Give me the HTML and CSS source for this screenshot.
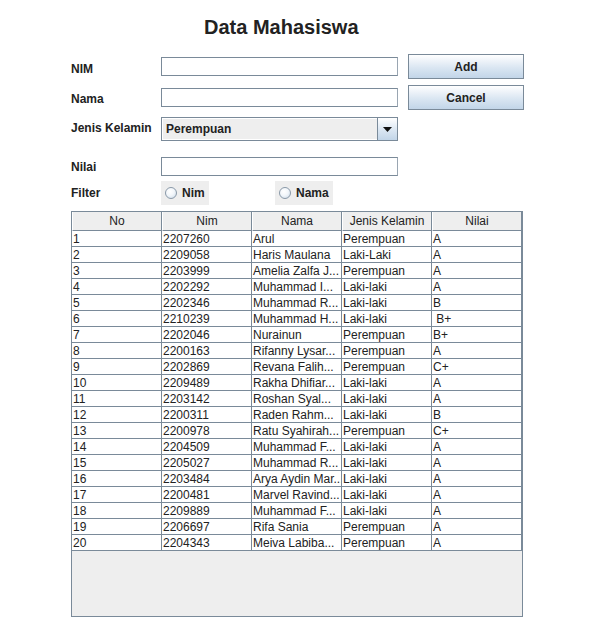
FILE: index.html
```html
<!DOCTYPE html>
<html>
<head>
<meta charset="utf-8">
<link rel="stylesheet" href="styles.css">
</head>
<body>
<div class="frame">
  <h1 class="title">Data Mahasiswa</h1>

  <div class="row row-nim">
    <span class="label lbl-nim">NIM</span>
    <div class="field"></div>
    <button class="btn">Add</button>
  </div>

  <div class="row row-nama">
    <span class="label lbl-nama">Nama</span>
    <div class="field"></div>
    <button class="btn">Cancel</button>
  </div>

  <div class="row row-jk">
    <span class="label lbl-jk">Jenis Kelamin</span>
    <div class="combo">
      <span class="combo-text">Perempuan</span>
      <span class="combo-arrow"><svg width="9" height="5" viewBox="0 0 9 5"><path d="M0 0H9L4.5 5Z" fill="#111"/></svg></span>
    </div>
  </div>

  <div class="row row-nilai">
    <span class="label">Nilai</span>
    <div class="field"></div>
  </div>

  <div class="row row-filter">
    <span class="label">Filter</span>
    <div class="radio-slot">
      <div class="radio"><span class="dot"></span><span>Nim</span></div>
    </div>
    <div class="radio"><span class="dot"></span><span>Nama</span></div>
  </div>

  <div class="pane">
    <div class="thead">
      <div class="th">No</div><div class="th">Nim</div><div class="th">Nama</div><div class="th">Jenis Kelamin</div><div class="th">Nilai</div>
    </div>
    <div class="tbody">
      <div class="td">1</div><div class="td">2207260</div><div class="td">Arul</div><div class="td">Perempuan</div><div class="td">A</div>
      <div class="td">2</div><div class="td">2209058</div><div class="td">Haris Maulana</div><div class="td">Laki-Laki</div><div class="td">A</div>
      <div class="td">3</div><div class="td">2203999</div><div class="td">Amelia Zalfa J...</div><div class="td">Perempuan</div><div class="td">A</div>
      <div class="td">4</div><div class="td">2202292</div><div class="td">Muhammad I...</div><div class="td">Laki-laki</div><div class="td">A</div>
      <div class="td">5</div><div class="td">2202346</div><div class="td">Muhammad R...</div><div class="td">Laki-laki</div><div class="td">B</div>
      <div class="td">6</div><div class="td">2210239</div><div class="td">Muhammad H...</div><div class="td">Laki-laki</div><div class="td"> B+</div>
      <div class="td">7</div><div class="td">2202046</div><div class="td">Nurainun</div><div class="td">Perempuan</div><div class="td">B+</div>
      <div class="td">8</div><div class="td">2200163</div><div class="td">Rifanny Lysar...</div><div class="td">Perempuan</div><div class="td">A</div>
      <div class="td">9</div><div class="td">2202869</div><div class="td">Revana Falih...</div><div class="td">Perempuan</div><div class="td">C+</div>
      <div class="td">10</div><div class="td">2209489</div><div class="td">Rakha Dhifiar...</div><div class="td">Laki-laki</div><div class="td">A</div>
      <div class="td">11</div><div class="td">2203142</div><div class="td">Roshan Syal...</div><div class="td">Laki-laki</div><div class="td">A</div>
      <div class="td">12</div><div class="td">2200311</div><div class="td">Raden Rahm...</div><div class="td">Laki-laki</div><div class="td">B</div>
      <div class="td">13</div><div class="td">2200978</div><div class="td">Ratu Syahirah...</div><div class="td">Perempuan</div><div class="td">C+</div>
      <div class="td">14</div><div class="td">2204509</div><div class="td">Muhammad F...</div><div class="td">Laki-laki</div><div class="td">A</div>
      <div class="td">15</div><div class="td">2205027</div><div class="td">Muhammad R...</div><div class="td">Laki-laki</div><div class="td">A</div>
      <div class="td">16</div><div class="td">2203484</div><div class="td">Arya Aydin Mar...</div><div class="td">Laki-laki</div><div class="td">A</div>
      <div class="td">17</div><div class="td">2200481</div><div class="td">Marvel Ravind...</div><div class="td">Laki-laki</div><div class="td">A</div>
      <div class="td">18</div><div class="td">2209889</div><div class="td">Muhammad F...</div><div class="td">Laki-laki</div><div class="td">A</div>
      <div class="td">19</div><div class="td">2206697</div><div class="td">Rifa Sania</div><div class="td">Perempuan</div><div class="td">A</div>
      <div class="td">20</div><div class="td">2204343</div><div class="td">Meiva Labiba...</div><div class="td">Perempuan</div><div class="td">A</div>
    </div>
  </div>
</div>
</body>
</html>
```

FILE: styles.css
```css
html, body {
  margin: 0;
  padding: 0;
  background: #ffffff;
}

body {
  font-family: "Liberation Sans", Arial, sans-serif;
  font-size: 12px;
  color: #222222;
}

.frame {
  padding-left: 71px;
}

.title {
  margin: 0 0 0 133px;
  padding-top: 15px;
  font-size: 20px;
  line-height: 24px;
  font-weight: bold;
  color: #222222;
}

.row {
  display: flex;
  align-items: center;
}

.row-nim {
  margin-top: 15px;
  height: 25px;
}

.row-nama {
  margin-top: 6px;
  height: 25px;
}

.row-jk {
  margin-top: 7px;
  height: 24px;
}

.row-nilai {
  margin-top: 16px;
  height: 19px;
}

.row-filter {
  margin-top: 5px;
  height: 24px;
}

.label {
  width: 90px;
  flex: none;
  font-weight: bold;
  line-height: 14px;
  color: #222222;
}

.lbl-nim {
  padding-top: 4px;
}

.lbl-nama {
  padding-top: 2px;
}

.lbl-jk {
  padding-bottom: 2px;
}

.field {
  box-sizing: border-box;
  width: 237px;
  height: 19px;
  border: 1px solid #7a8a99;
  border-right-color: #9aa6b2;
  background: #ffffff;
  flex: none;
}

.btn {
  box-sizing: border-box;
  margin: 0 0 0 10px;
  width: 116px;
  height: 25px;
  padding: 0;
  border: 1px solid #7a8a99;
  background: linear-gradient(to bottom, #ffffff 0%, #eef3f9 25%, #dae6f2 55%, #c2d5e8 100%);
  font-family: "Liberation Sans", Arial, sans-serif;
  font-size: 12px;
  font-weight: bold;
  color: #222222;
  flex: none;
}

.combo {
  box-sizing: border-box;
  width: 237px;
  height: 24px;
  border: 1px solid #7a8a99;
  background: #eeeeee;
  display: flex;
  align-items: stretch;
  flex: none;
}

.combo-text {
  flex: 1;
  display: flex;
  align-items: center;
  padding-left: 3px;
  font-weight: bold;
  color: #222222;
  border: 1px solid #ffffff;
  border-right: none;
}

.combo-arrow {
  width: 19px;
  border-left: 1px solid #7a8a99;
  background: linear-gradient(to bottom, #ffffff 0%, #eef3f9 25%, #dae6f2 55%, #c2d5e8 100%);
  display: flex;
  align-items: center;
  justify-content: center;
}

.radio-slot {
  width: 114px;
  flex: none;
  display: flex;
}

.radio {
  height: 24px;
  background: #eeeeee;
  display: flex;
  align-items: center;
  padding: 0 4px;
  font-weight: bold;
  color: #222222;
  gap: 5px;
}

.dot {
  box-sizing: border-box;
  width: 12px;
  height: 12px;
  border-radius: 50%;
  border: 1px solid #8a99a8;
  background: radial-gradient(circle at 40% 35%, #ffffff 0%, #f2f6fa 45%, #c9d8e7 100%);
}

.pane {
  margin-top: 6px;
  box-sizing: border-box;
  width: 452px;
  height: 406px;
  border: 1px solid #7a8a99;
  background: #eeeeee;
}

.thead {
  display: grid;
  grid-template-columns: repeat(5, 90px);
  height: 19px;
}

.th {
  box-sizing: border-box;
  border-right: 1px solid #7a8a99;
  border-bottom: 1px solid #7a8a99;
  border-left: 1px solid #ffffff;
  background: #eeeeee;
  text-align: center;
  padding-top: 1px;
  line-height: 17px;
  color: #222222;
}

.tbody {
  display: grid;
  grid-template-columns: repeat(5, 90px);
  grid-auto-rows: 16px;
}

.td {
  box-sizing: border-box;
  border-right: 1px solid #7a8a99;
  border-bottom: 1px solid #7a8a99;
  background: #ffffff;
  padding-left: 1px;
  padding-top: 1px;
  line-height: 14px;
  white-space: pre;
  overflow: hidden;
  color: #222222;
}
```
